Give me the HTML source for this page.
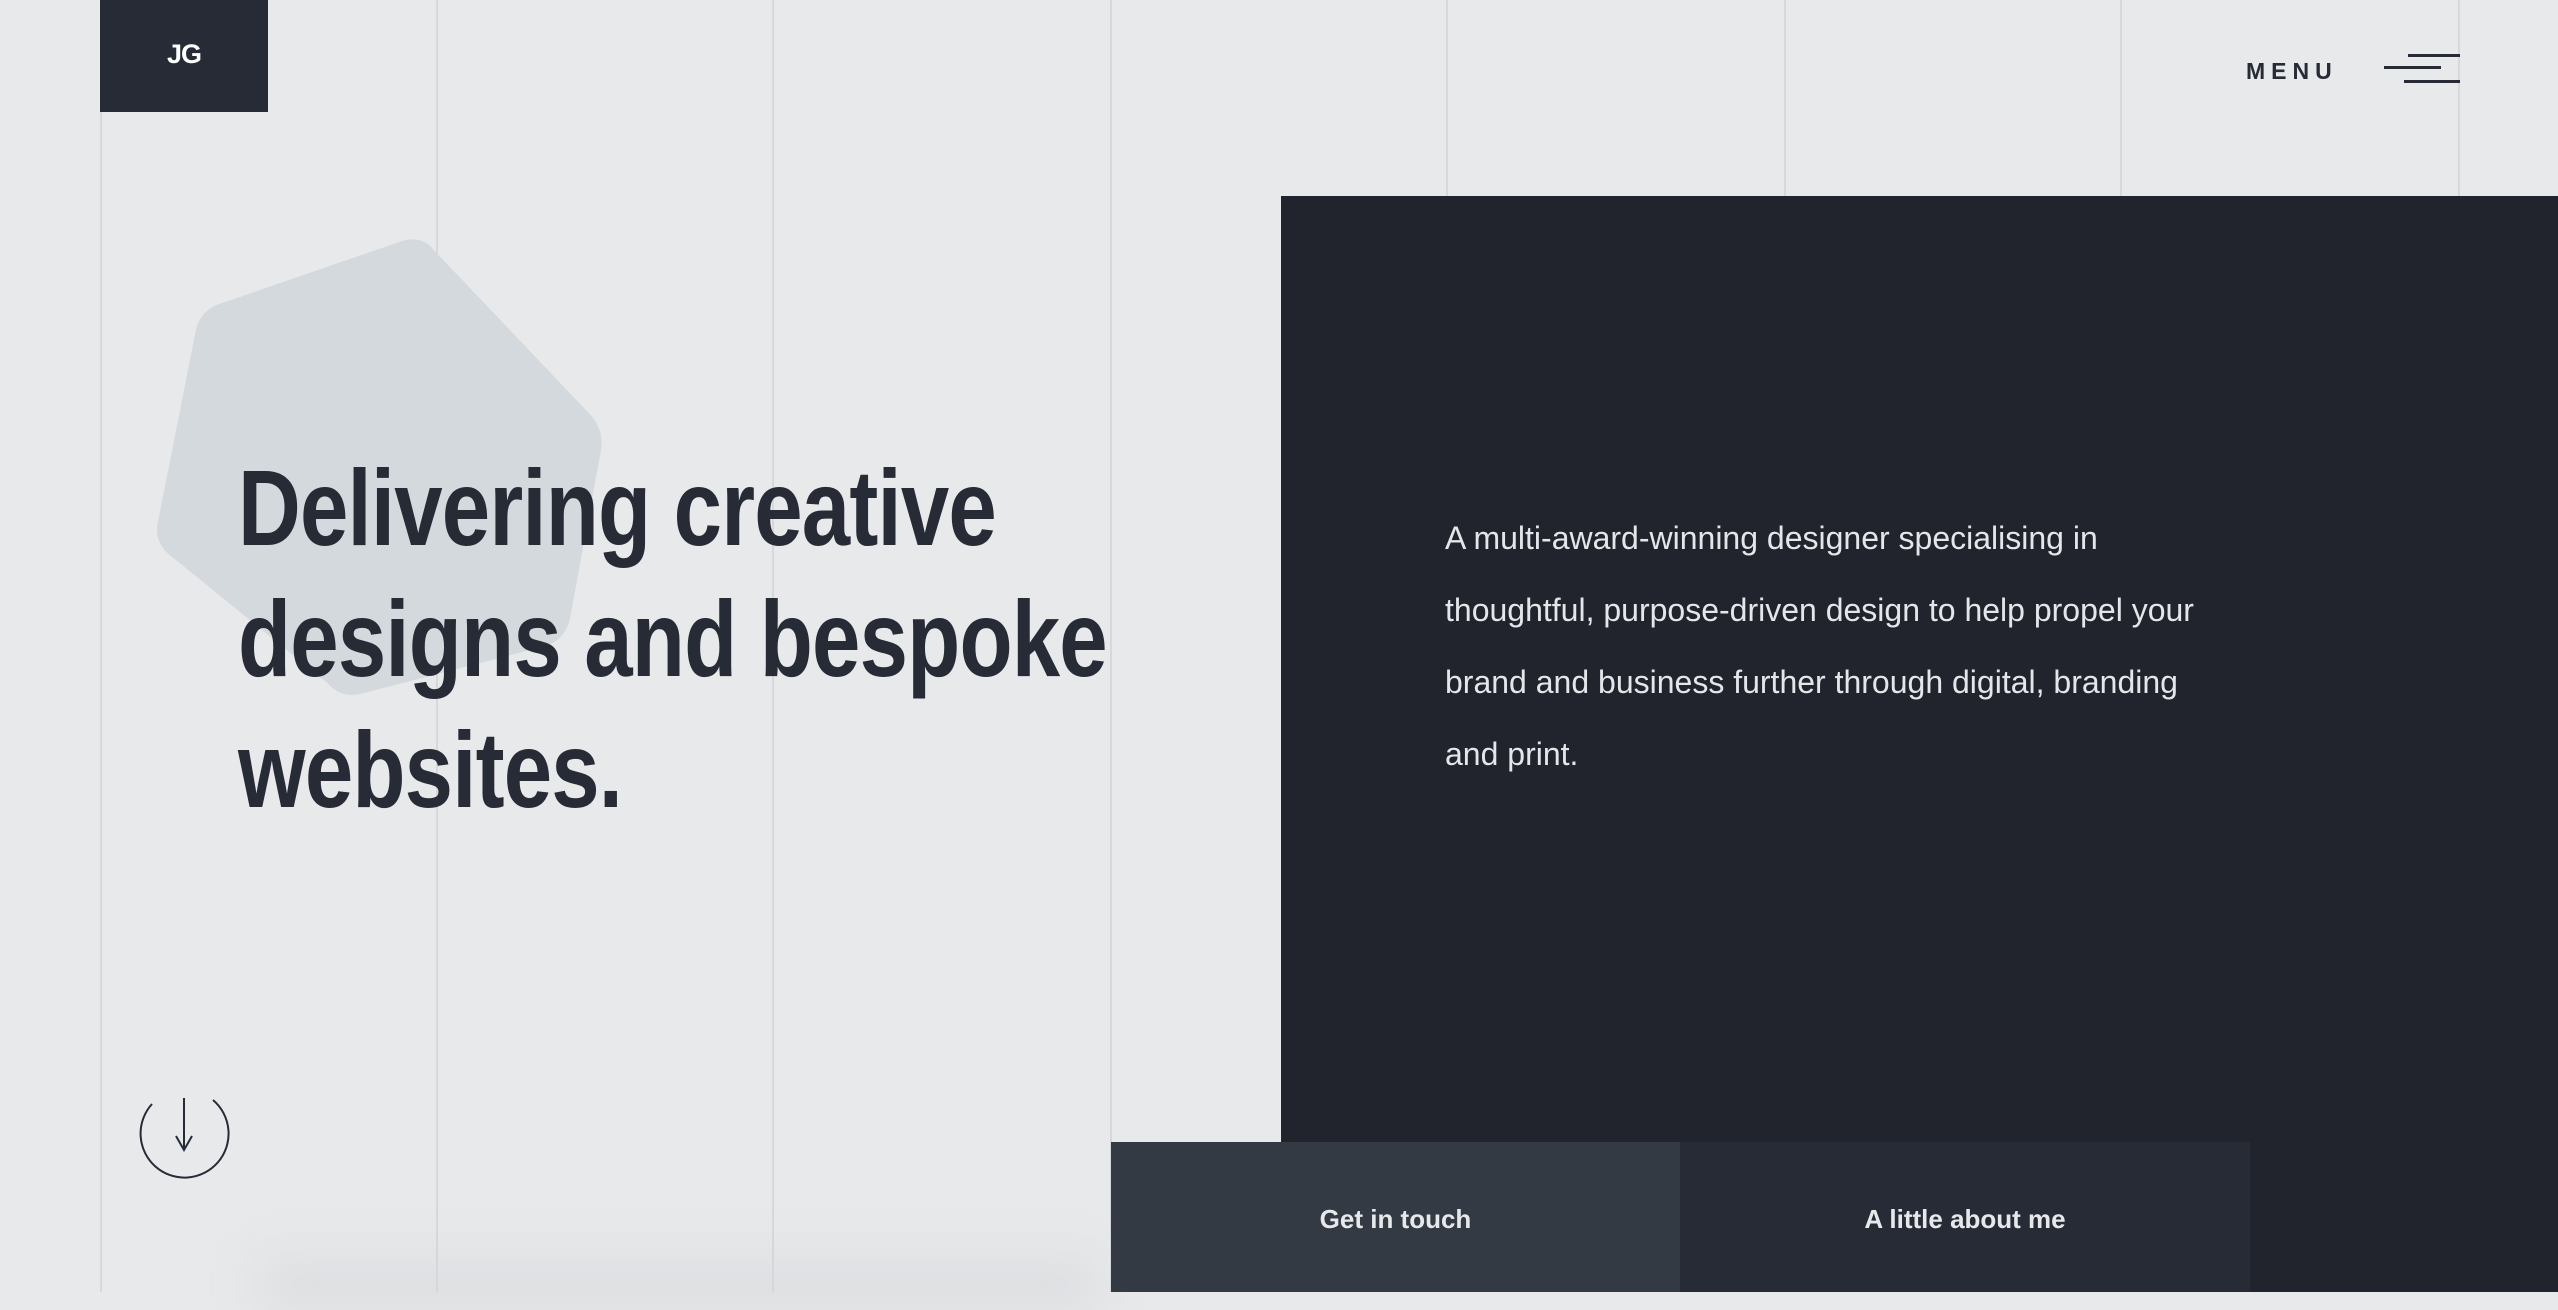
<!DOCTYPE html>
<html><head><meta charset="utf-8"><style>
html,body{margin:0;padding:0;}
body{width:2558px;height:1292px;overflow:hidden;position:relative;background:#e8e9eb;font-family:"Liberation Sans",sans-serif;}
.vl{position:absolute;top:0;width:2px;height:1292px;background:#d6d8db;}
.logo{position:absolute;left:100px;top:0;width:168px;height:112px;background:#262b36;color:#fff;font-weight:bold;font-size:27px;text-align:center;line-height:108px;letter-spacing:-1px;}
.menu{position:absolute;left:2246px;top:58px;font-size:23px;font-weight:bold;letter-spacing:6px;color:#262b36;}
.bar{position:absolute;height:3px;background:#262b36;}
.panel{position:absolute;left:1281px;top:196px;width:1277px;height:1096px;background:#21242d;}
.para{position:absolute;left:1445px;top:502px;white-space:nowrap;color:#e4e6ea;font-size:32px;line-height:72px;}
h1{position:absolute;left:238px;top:442px;margin:0;font-size:108px;line-height:131px;font-weight:bold;color:#262b36;transform:scaleX(0.805);transform-origin:left top;white-space:nowrap;letter-spacing:-1px;}
.btn{position:absolute;top:1142px;height:150px;color:#e6e8eb;font-weight:bold;font-size:26px;text-align:center;line-height:154px;}
.shadow{position:absolute;left:260px;top:1260px;width:840px;height:50px;background:rgba(212,214,217,0.6);filter:blur(25px);}
</style></head><body>
<div class="vl" style="left:100px"></div>
<div class="vl" style="left:436px"></div>
<div class="vl" style="left:772px"></div>
<div class="vl" style="left:1110px"></div>
<div class="vl" style="left:1446px"></div>
<div class="vl" style="left:1784px"></div>
<div class="vl" style="left:2120px"></div>
<div class="vl" style="left:2458px"></div>
<div class="shadow"></div>
<svg style="position:absolute;left:0;top:0" width="1281" height="1292">
<path d="M400 246 Q420 238 432 254 L588 418 Q600 432 597 450 L566 618 Q562 636 545 642 L360 690 Q342 694 330 680 L170 550 Q158 538 162 522 L200 330 Q204 314 220 308 Z" fill="#d4d9dd" stroke="#d4d9dd" stroke-width="8" stroke-linejoin="round"/>
<path d="M152 1104 A44 44 0 1 0 213 1100" fill="none" stroke="#262b36" stroke-width="2"/>
<line x1="184" y1="1098" x2="184" y2="1150" stroke="#262b36" stroke-width="2"/>
<path d="M176 1136 L184 1150 L192 1136" fill="none" stroke="#262b36" stroke-width="2"/>
</svg>
<div class="logo">JG</div>
<div class="menu">MENU</div>
<div class="bar" style="left:2408px;top:54px;width:52px"></div>
<div class="bar" style="left:2384px;top:66px;width:57px"></div>
<div class="bar" style="left:2404px;top:80px;width:56px"></div>
<h1>Delivering creative<br>designs and bespoke<br>websites.</h1>
<div class="panel"></div>
<div class="para">A multi-award-winning designer specialising in<br>thoughtful, purpose-driven design to help propel your<br>brand and business further through digital, branding<br>and print.</div>
<div class="btn" style="left:1111px;width:569px;background:#333a43">Get in touch</div>
<div class="btn" style="left:1680px;width:570px;background:#262b36">A little about me</div>
</body></html>
